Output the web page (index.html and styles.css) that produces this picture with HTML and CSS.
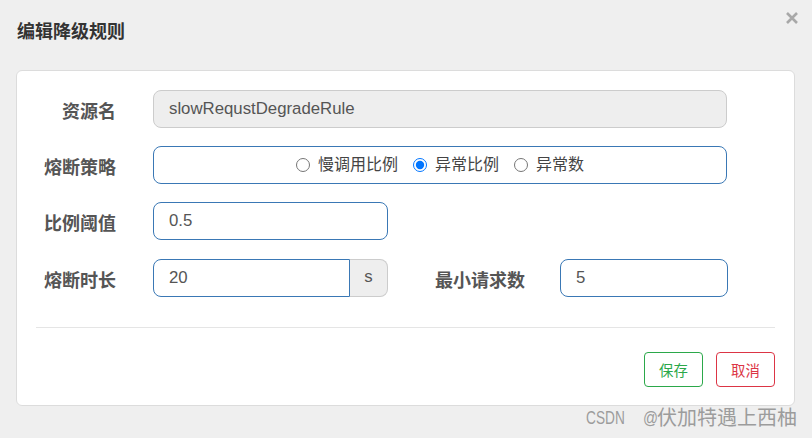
FILE: index.html
```html
<!DOCTYPE html>
<html lang="zh-CN">
<head>
<meta charset="utf-8">
<title>编辑降级规则</title>
<link rel="stylesheet" href="styles.css">
</head>
<body>
<div class="dialog">
  <div class="header">
    <div class="title">编辑降级规则</div>
    <div class="close" aria-label="关闭">
      <svg width="12" height="12" viewBox="0 0 12 12"><path d="M1 1L11 11M11 1L1 11" stroke="#a8a8a8" stroke-width="2.6" stroke-linecap="butt"/></svg>
    </div>
  </div>
  <div class="card">
    <div class="form">
      <div class="row">
        <label class="label">资源名</label>
        <input class="control control-full readonly" type="text" value="slowRequstDegradeRule" readonly>
      </div>
      <div class="row">
        <label class="label">熔断策略</label>
        <div class="control control-full radios">
          <label class="radio"><input type="radio" name="grade"><span>慢调用比例</span></label>
          <label class="radio"><input type="radio" name="grade" checked><span>异常比例</span></label>
          <label class="radio"><input type="radio" name="grade"><span>异常数</span></label>
        </div>
      </div>
      <div class="row">
        <label class="label">比例阈值</label>
        <input class="control control-half" type="text" value="0.5">
      </div>
      <div class="row row-last">
        <label class="label">熔断时长</label>
        <div class="group">
          <input class="control group-input" type="text" value="20">
          <span class="addon">s</span>
        </div>
        <label class="label label-inline">最小请求数</label>
        <input class="control control-small" type="text" value="5">
      </div>
    </div>
    <div class="divider"></div>
    <div class="actions">
      <button class="btn btn-save">保存</button>
      <button class="btn btn-cancel">取消</button>
    </div>
  </div>
</div>
<div class="watermark"><span class="wm-latin">CSDN</span><span class="wm-at">@</span>伏加特遇上西柚</div>
</body>
</html>
```

FILE: styles.css
```css
* { box-sizing: border-box; }

html, body {
  margin: 0;
  padding: 0;
}

body {
  width: 812px;
  height: 438px;
  overflow: hidden;
  position: relative;
  background: #efefef;
  font-family: "Liberation Sans", "Noto Sans CJK SC", sans-serif;
  color: #555;
}

.dialog {
  display: flex;
  flex-direction: column;
}

.header {
  height: 70px;
  display: flex;
  justify-content: space-between;
  align-items: flex-start;
  padding: 0 14px 0 17px;
}

.title {
  margin-top: 20px;
  line-height: 24px;
  font-size: 18px;
  font-weight: bold;
  color: #333;
}

.close {
  margin-top: 12px;
  width: 12px;
  height: 12px;
  display: flex;
}

.card {
  margin: 0 17px 0 16px;
  background: #fff;
  border: 1px solid #dcdcdc;
  border-radius: 6px;
  padding: 19px 19px 18px 19px;
}

.form {
  display: flex;
  flex-direction: column;
  gap: 18px;
}

.row {
  display: flex;
  align-items: flex-start;
}

.row-last {
  margin-top: 1px;
}

.label {
  width: 80px;
  flex: none;
  text-align: right;
  font-size: 18px;
  font-weight: bold;
  color: #555;
  padding-top: 7px;
  line-height: 30px;
  margin-right: 37px;
}

.label-inline {
  width: auto;
  margin-left: 47px;
  margin-right: 35px;
}

.control {
  height: 38px;
  border: 1px solid #3a78b5;
  border-radius: 8px;
  background: #fff;
  padding: 0 15px;
  font-family: "Liberation Sans", "Noto Sans CJK SC", sans-serif;
  font-size: 16.8px;
  color: #555;
  outline: none;
  flex: none;
}

.control-full { width: 574px; }
.control-half { width: 235px; }
.control-small { width: 168px; }

.readonly {
  background: #eeeeee;
  border-color: #cccccc;
}

.radios {
  display: flex;
  justify-content: center;
  align-items: center;
  gap: 15px;
  padding: 0;
}

.radio {
  display: flex;
  align-items: center;
  gap: 8px;
  font-size: 16px;
  color: #444;
}

.radio input {
  width: 14px;
  height: 14px;
  margin: 0;
}

.radio span {
  line-height: 20px;
}

.group {
  display: flex;
  width: 235px;
  flex: none;
}

.group-input {
  width: 197px;
  border-radius: 8px 0 0 8px;
}

.addon {
  width: 38px;
  height: 38px;
  display: flex;
  align-items: center;
  justify-content: center;
  background: #eeeeee;
  border: 1px solid #cccccc;
  border-left: none;
  border-radius: 0 8px 8px 0;
  font-size: 16.8px;
  color: #555;
  padding-bottom: 2px;
}

.divider {
  margin-top: 30px;
  border-top: 1px solid #e5e5e5;
}

.actions {
  margin-top: 24px;
  display: flex;
  justify-content: flex-end;
  gap: 13px;
}

.btn {
  width: 59px;
  height: 35px;
  background: #fff;
  border-radius: 4px;
  font-family: "Liberation Sans", "Noto Sans CJK SC", sans-serif;
  font-size: 14.4px;
  padding: 0;
  cursor: pointer;
}

.btn-save {
  border: 1px solid #2ba84a;
  color: #2ba84a;
}

.btn-cancel {
  border: 1px solid #dc3545;
  color: #dc3545;
}

.watermark {
  position: absolute;
  right: 15px;
  top: 408px;
  line-height: 20px;
  font-size: 20px;
  color: #9c9c9c;
  white-space: nowrap;
  display: flex;
  align-items: center;
  font-family: "Liberation Sans", "Noto Sans CJK SC", sans-serif;
}

.wm-latin {
  display: inline-block;
  width: 39px;
  font-size: 19px;
  transform: scaleX(0.72);
  transform-origin: left center;
}

.wm-at {
  display: inline-block;
  width: 14px;
  margin-left: 18px;
  font-size: 19px;
  transform: scaleX(0.78);
  transform-origin: left center;
}
```
